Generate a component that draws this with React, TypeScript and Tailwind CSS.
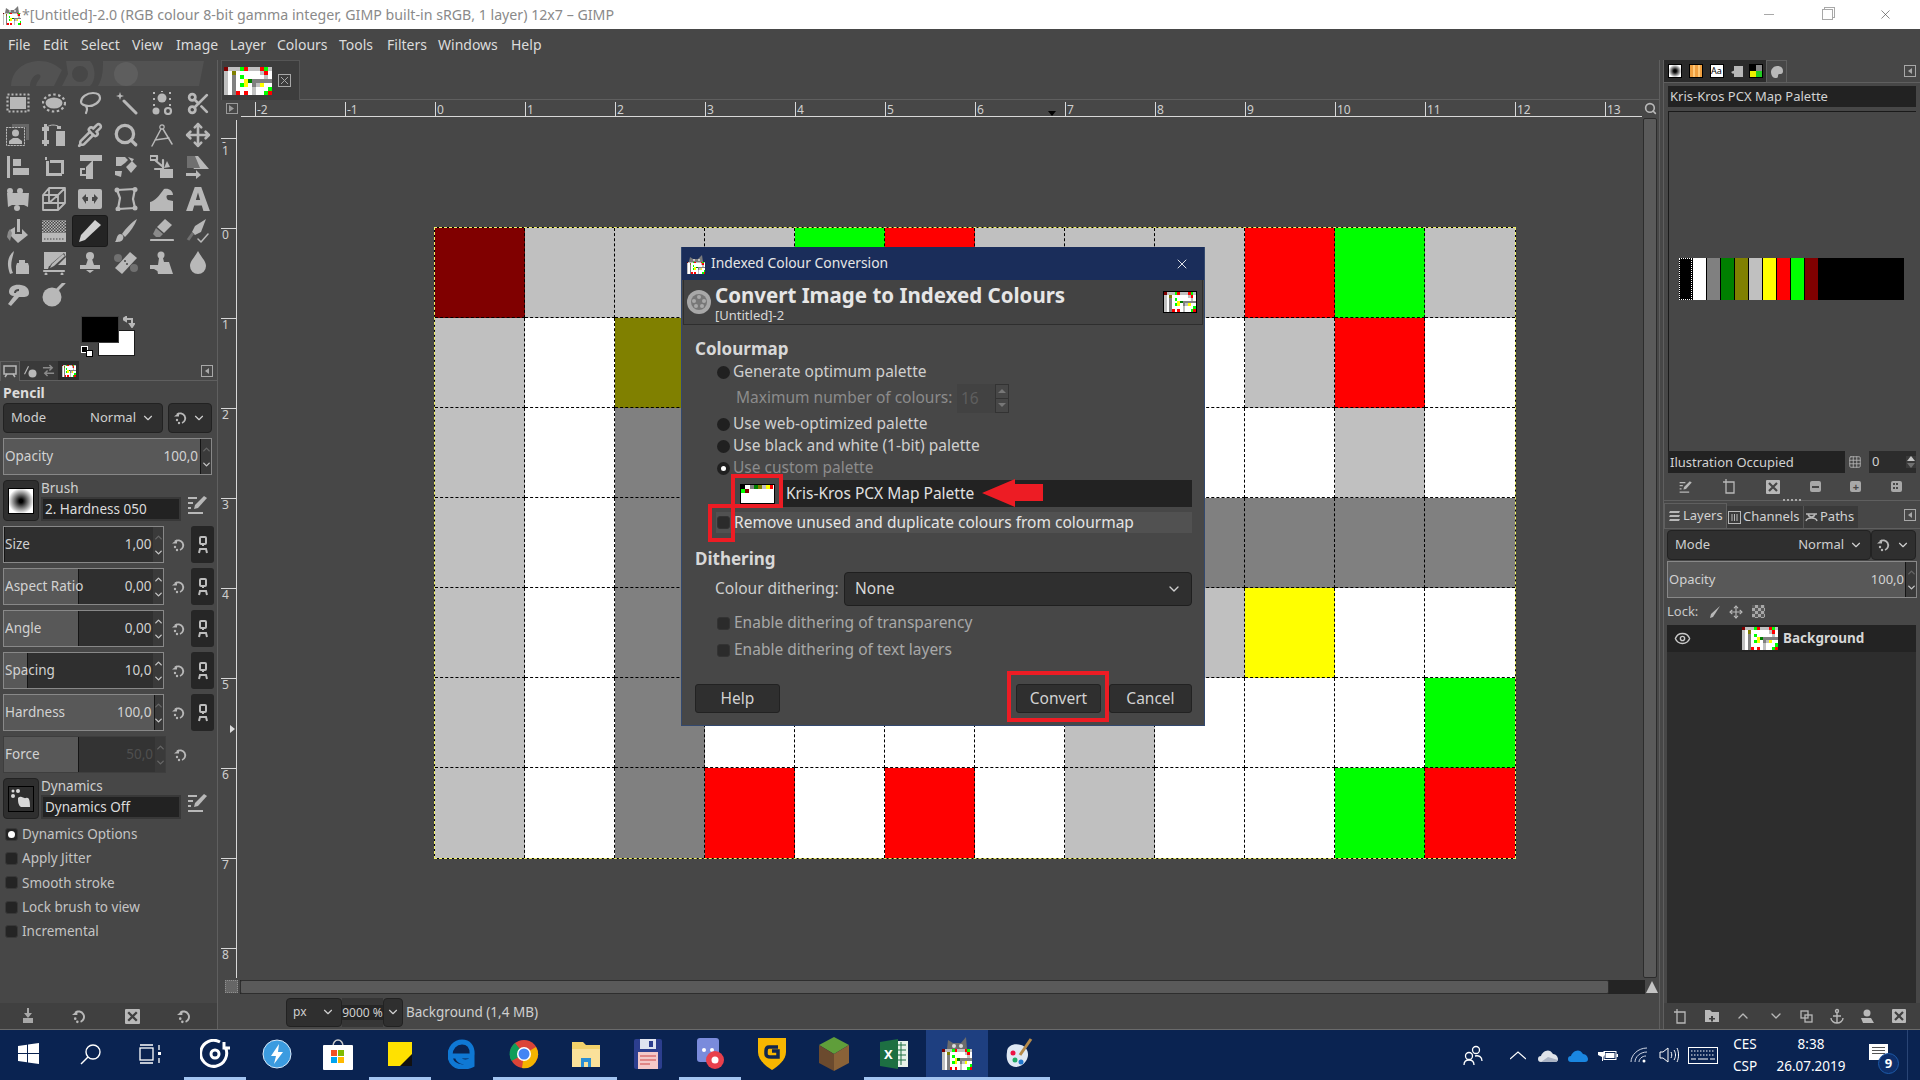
import React from "react";
import { Pipette, Search, Move, Scissors, Eye, Grid3x3, X, ChevronDown, ChevronUp } from "lucide-react";

const G = "#b8b8b8";
const cellClass: Record<string, string> = {
  m: "bg-[#800000]",
  s: "bg-[#c0c0c0]",
  g: "bg-[#808080]",
  w: "bg-[#ffffff]",
  o: "bg-[#808000]",
  r: "bg-[#ff0000]",
  l: "bg-[#00ff00]",
  y: "bg-[#ffff00]",
  k: "bg-[#008000]",
};
const canvasRows = [
  "mssslrsssrls",
  "swowwwwwwsrw",
  "swgwlwwwwwsw",
  "swgwwykggggg",
  "swgwlywgsyww",
  "swgwwwwswwwl",
  "swgrwrwswwlr",
];

function Thumb({ w, h, cell }: { w: number; h: number; cell: string }) {
  return (
    <div className={"flex flex-col overflow-hidden shrink-0 " + cell} style={{ width: w, height: h }}>
      {canvasRows.map((r, i) => (
        <div key={i} className="flex flex-1">
          {r.split("").map((c, j) => (
            <div key={j} className={"flex-1 " + cellClass[c]} />
          ))}
        </div>
      ))}
    </div>
  );
}
function AppIcon() {
  return (
    <div className="w-[20px] h-[20px] flex flex-col items-center justify-end shrink-0">
      <svg width="16" height="7" viewBox="0 0 16 7" className="block"><path d="M1 7L2 2l3 2h5l4-4 1 7z" fill="#7a7a7a" /><circle cx="6" cy="5" r="1" fill="#ddd" /><circle cx="11" cy="5" r="1" fill="#ddd" /></svg>
      <Thumb w={19} h={12} cell="" />
    </div>
  );
}

function Ic({ children, s = 24 }: { children: React.ReactNode; s?: number }) {
  return (
    <svg width={s} height={s} viewBox="0 0 24 24" fill={G} stroke="none">
      {children}
    </svg>
  );
}
const st = { fill: "none", stroke: G, strokeWidth: 2.2, strokeLinecap: "round" as const, strokeLinejoin: "round" as const };

const tools: React.ReactNode[] = [
  <Ic><rect x="1.5" y="3.5" width="21" height="17" {...st} strokeLinecap="butt" strokeDasharray="2 2" /><rect x="4" y="6" width="16" height="12" /></Ic>,
  <Ic><ellipse cx="12" cy="12" rx="11" ry="8.5" {...st} strokeLinecap="butt" strokeDasharray="2.5 2.5" /><ellipse cx="12" cy="12" rx="8.5" ry="5.5" /></Ic>,
  <Ic><path d="M3 11C3 6 9 2 15 2s7 3 7 5c0 4-6 8-11 8-5 0-8-2-8-4zM6 14c3 1 4 4 2 8" {...st} /></Ic>,
  <Ic><path d="M10 10l12 12" {...st} strokeWidth={3} /><path d="M6 1l1 3 3 1-3 1-1 3-1-3-3-1 3-1z" /></Ic>,
  <Ic><circle cx="12" cy="7" r="4.5" /><path d="M3 1h2v2H3zM11 0h2v1h-2zM19 1h2v2h-2zM3 7h2v2H3zM19 7h2v2h-2zM3 13h2v2H3zM19 13h2v2h-2z" /><circle cx="6" cy="20" r="3.5" /><circle cx="18" cy="20" r="3" {...st} /></Ic>,
  <Scissors size={25} color={G} strokeWidth={2.6} />,
  <Ic><rect x="0.5" y="4.5" width="18" height="18" {...st} strokeWidth={1} strokeDasharray="1.5 1.5" /><circle cx="9.5" cy="10" r="3.5" /><path d="M3 21v-3l4-3h5l4 3v3z" /><path d="M6 1h17v16h-3V4H6z" fill="#666" /></Ic>,
  <Ic><path d="M2 1h3v22H2zM0 4h7v4H0zM0 17h7v4H0z" /><path d="M5 4c4-3 8-2 11-1" {...st} strokeWidth={1} /><path d="M15 3h4v3h-4zM14 8h9v15h-9z" /></Ic>,
  <Pipette size={26} color={G} strokeWidth={2.4} />,
  <Search size={26} color={G} strokeWidth={3} />,
  <Ic><circle cx="12" cy="4" r="2.2" {...st} strokeWidth={1.2} /><path d="M11 6L2 23M13 6l9 15M5 17l14-2" {...st} strokeWidth={1.5} /></Ic>,
  <Move size={26} color={G} strokeWidth={2.4} />,
  <Ic><path d="M1 1h3v22H1zM7 4h8v7H7zM7 13h16v7H7z" /></Ic>,
  <Ic><path d="M3 2h2v3H3zM4 6h3v12h13v3H4zM8 5h14v14h-3V8H8z" /></Ic>,
  <Ic><path d="M2 0h22v6h-9v18h-7V12l6-6H2z" /><path d="M2 13h5v2H4v4h4v-2l3 3-3 3v-2H2z" /></Ic>,
  <Ic><path d="M2 2h9l3 3-3 3-4 3H2zM12 12l6-6 5 5-6 7zM14 2l6 2-2 3zM1 16h7l-1 6-6-2z" /></Ic>,
  <Ic><path d="M0 1h7v4H0zM6 6l6 5M13 5v9H5" {...st} /><path d="M10 14h13v9H10z" /><path d="M17 6l3 6-6 1z" fill={G} /></Ic>,
  <Ic><path d="M1 1h11l11 13H8z" /><path d="M1 1h8l5 12H1z" fill="#707070" /><path d="M0 18h10v-3l5 5-5 4v-3H0z" /></Ic>,
  <Ic><path d="M1 6h22l-1 14-4-2H6l-4 2z" /><circle cx="4" cy="4" r="3" /><circle cx="14" cy="4" r="3" /><circle cx="11" cy="21" r="3" /></Ic>,
  <Ic><path d="M1 8l6-7h16v15l-7 7H1zM1 8h15v15M16 8l7-7M7 1v15H1M7 16h16M7 16l9-8" fill="none" stroke={G} strokeWidth={1.8} strokeLinejoin="round" /></Ic>,
  <Ic><rect x="0" y="2" width="24" height="20" rx="2" /><path d="M4 11l4-4v3h2v4H8v3zM20 11l-4-4v3h-2v4h2v3z" fill="#474747" /></Ic>,
  <Ic><path d="M3 3l18-1-2 10 2 9-17 1 2-11z" {...st} /><circle cx="3" cy="3" r="2.5" /><circle cx="21" cy="2.5" r="2.5" /><circle cx="21" cy="21" r="2.5" /><circle cx="4" cy="22" r="2.5" /></Ic>,
  <Ic><path d="M0 24V15C5 14 9 9 14 2c5-1 9 2 9 6h-5c-2 0-2 3 0 5l5 1v10z" /></Ic>,
  <Ic s={26}><path d="M9 1h6l8 22h-6l-1.500-5h-7L7 23H1zM10 13h4l-2-7z" fillRule="evenodd" /></Ic>,
  <Ic><path d="M11 0h3v13h-3z" /><path d="M4 11l5-3v7h7v-5l6 6-10 8-9-9z" /><path d="M2 13l2-3 2 4-2 8-3-4z" fill="#8a8a8a" /></Ic>,
  <svg width={24} height={24} viewBox="0 0 24 24"><defs><pattern id="ck" width="3" height="3" patternUnits="userSpaceOnUse"><rect width="1.500" height="1.500" fill={G} /><rect x="1.500" y="1.500" width="1.500" height="1.500" fill={G} /></pattern></defs><rect x="0" y="1" width="24" height="14" fill="url(#ck)" /><rect x="0" y="14" width="24" height="9" fill={G} /><path d="M2 20h20" stroke="#474747" strokeDasharray="1.5 1.5" /></svg>,
  <Ic><path d="M17 1l6 5L7 21l-6 2 2-7z" fill="#d0d0d0" /></Ic>,
  <Ic><path d="M23 0C18 3 12 9 8 15l3 3C16 13 21 6 23 0z" /><path d="M6 15c3 0 4 3 3 5-1 3-5 3-8 3 2-2 1-7 5-8z" /></Ic>,
  <Ic><path d="M15 0l7 6-8 8-7-6z" /><path d="M6 9l7 6-3 3H6l-3-3z" fill="#8a8a8a" /><path d="M1 21h22" {...st} /></Ic>,
  <Ic><path d="M20 0L9 7l-3 6 3 3 6-3z" /><path d="M7 14l-5 7" stroke="#707070" strokeWidth={3} /><path d="M12 20l3 3 7-8" {...st} strokeWidth={1.5} /></Ic>,
  <Ic><path d="M8 0C2 5 0 12 4 23l3-1C3 14 7 6 8 0z" /><path d="M13 9h6v3h3l1 3v8H10v-8l1-3h2z" /></Ic>,
  <Ic><path d="M2 1h22v13H12l-5 1-1 3H2z" /><path d="M22 2L9 13l-3 7 7-3L24 6z" fill="#474747" /><path d="M21 3L10 13l-2 4 4-2L23 5z" /><path d="M2 20h20" {...st} /><circle cx="4" cy="23" r="1.5" /><circle cx="20" cy="23" r="1.500" /></Ic>,
  <Ic><circle cx="12" cy="5" r="4" /><path d="M10 8h4l2 6h6v4H2v-4h6zM8 19h8l-4 3z" /></Ic>,
  <Ic><path d="M16 1l7 6L8 23l-7-6z" /><circle cx="4" cy="7" r="4" fill="#707070" /><circle cx="20" cy="17" r="4" fill="#707070" /><circle cx="11" cy="10" r="1" fill="#474747" /><circle cx="13" cy="13" r="1" fill="#474747" /></Ic>,
  <Ic><circle cx="11" cy="4" r="3.500" /><path d="M9 7h4l1 4h5l4 12H8l-1-5H0v-4h8zM4 18h9l-4 3z" /></Ic>,
  <Ic><path d="M12 0c3 6 8 10 8 15a8 8 0 0 1-16 0c0-5 5-9 8-15z" /></Ic>,
  <Ic><path d="M3 9c0-6 6-8 12-7s8 4 8 8-4 4-7 4h-3l-8 9-3-2 6-8C5 13 3 11 3 9z" /><path d="M13 7c-2 0-4 1-4 3" stroke="#474747" strokeWidth={2} fill="none" /></Ic>,
  <Ic><circle cx="10" cy="14" r="9.500" /><path d="M15 7l7-7" {...st} strokeWidth={3} /></Ic>,
];

function Rst({ c = G, s = 14 }: { c?: string; s?: number }) {
  return (
    <svg width={s} height={s} viewBox="0 0 14 14" fill="none">
      <path d="M3 3.500A5 5 0 1 1 8 12" stroke={c} strokeWidth="1.800" />
      <path d="M0 4h5V0z" fill={c} transform="translate(0 1.500)" />
      <circle cx="3" cy="9" r="1.200" fill={c} />
      <circle cx="5" cy="12" r="1.200" fill={c} />
    </svg>
  );
}
function Lock() {
  return (
    <svg width="10" height="18" viewBox="0 0 10 18" fill="none" stroke="#bdbdbd" strokeWidth="2">
      <rect x="2" y="1" width="6" height="7" rx="1" />
      <path d="M5 8v2M1 17l1-4h6l1 4" />
    </svg>
  );
}
function EditI() {
  return (
    <svg width="22" height="20" viewBox="0 0 22 20" fill={G}>
      <path d="M1 2h9v2H1zM1 7h5v2H1zM1 12h3v2H1zM1 17h15v2H1z" />
      <path d="M17 1l3 2-9 10-4 1 1-4z" />
    </svg>
  );
}
function Dn({ c = "#d0d0d0", s = 14 }: { c?: string; s?: number }) {
  return <ChevronDown size={s} color={c} strokeWidth={2} />;
}
function Spin({ dim = false, topDim = false }: { dim?: boolean; topDim?: boolean }) {
  return (
    <div className="w-[10px] flex flex-col items-center justify-center bg-[#3a3a3a] self-stretch gap-1">
      <ChevronUp size={11} strokeWidth={3} color={dim || topDim ? "#666" : "#c4c4c4"} />
      <ChevronDown size={11} strokeWidth={3} color={dim ? "#666" : "#c4c4c4"} />
    </div>
  );
}
function Slider({ label, value, fill, topDim, disabled }: { label: string; value: string; fill: number; topDim?: boolean; disabled?: boolean }) {
  return (
    <div className={"relative w-[163px] h-[37px] flex items-center border " + (disabled ? "border-[#3e3e3e] bg-[#333]" : "border-[#888] bg-[#2f2f2f]")}>
      <div className="absolute left-0 top-0 bottom-0 bg-[#585858] border-r border-[#151515]" style={{ width: fill }} />
      <span className="relative pl-[1px] flex-1 text-[#d2d2d2]">{label}</span>
      <span className={"relative pr-[2px] " + (disabled ? "text-[#4f4f4f]" : "text-[#d2d2d2]")}>{value}</span>
      <Spin dim={disabled} topDim={topDim} />
    </div>
  );
}
function SpinRow(p: { label: string; value: string; fill: number; topDim?: boolean; disabled?: boolean }) {
  return (
    <div className="flex items-center h-[37px]">
      <Slider {...p} />
      <div className="w-[27px] flex justify-center pl-[3px]"><Rst /></div>
      {!p.disabled && (
        <div className="w-[23px] h-[37px] rounded-[3px] bg-[#262626] flex items-center justify-center"><Lock /></div>
      )}
    </div>
  );
}
function Check({ label, on }: { label: string; on?: boolean }) {
  return (
    <div className="flex items-center h-[24.300px] gap-[4px] pl-[2px] text-[#c4c4c4]">
      <div className="w-[13px] h-[13px] rounded-[3px] bg-[#242424] border border-[#383838] flex items-center justify-center">
        {on && <div className="w-[7px] h-[7px] rounded-full bg-white" />}
      </div>
      <span>{label}</span>
    </div>
  );
}
function Combo({ w, label, value, h = 30 }: { w: number; label: string; value: string; h?: number }) {
  return (
    <div className="flex items-center px-[7px] rounded-[4px] bg-[#2f2f2f] border border-[#222] text-[#cfcfcf] text-[13px]" style={{ width: w, height: h }}>
      <span className="flex-1">{label}</span>
      <span className="mr-[5px]">{value}</span>
      <Dn />
    </div>
  );
}
function ResetCombo({ w }: { w: number }) {
  return (
    <div className="h-[30px] flex items-center justify-between px-[5px] rounded-[4px] bg-[#2f2f2f] border border-[#222]" style={{ width: w }}>
      <Rst /><Dn />
    </div>
  );
}

function LeftDock() {
  return (
    <div className="w-[218px] h-full shrink-0 flex flex-col border-r border-[#5f5f5f] text-[13.500px]">
      <div className="h-[27px] relative shrink-0">
        <svg width="218" height="27" viewBox="0 0 218 27" fill="#525252" className="block">
          <path d="M11 26C12 10 24 1 40 1c8 0 15 3 22 9l-8 16H36c1-6 6-8 4-11-3-3-10 3-10 11z" />
          <path d="M66 1h24c6 6 6 20 0 25H62l6-12zM72 14a8 8 0 1 0 16 0 8 8 0 0 0-16 0z" fillRule="evenodd" />
          <path d="M103 1h101l-5 25H98c5-8 5-18 5-25z" />
          <circle cx="126" cy="14" r="12" fill="#5e5e5e" />
        </svg>
      </div>
      <div className="grid grid-cols-[repeat(6,36px)] auto-rows-[32px] w-[216px] shrink-0">
        {tools.map((t, i) => (
          <div key={i} className="flex items-center justify-center">
            <div className={"w-[36px] h-[32px] flex items-center justify-center rounded-[3px] " + (i === 26 ? "bg-[#242424] border border-[#1a1a1a]" : "")}>{t}</div>
          </div>
        ))}
      </div>
      <div className="relative h-[50px] shrink-0">
        <div className="absolute left-[98px] top-[19px] w-[37px] h-[26px] bg-white border border-[#1c1c1c]" />
        <div className="absolute left-[81px] top-[5px] w-[38px] h-[27px] bg-black border border-[#3c3c3c]" />
        <div className="absolute left-[81px] top-[35px] w-[7px] h-[7px] bg-black border border-white" />
        <div className="absolute left-[86px] top-[39px] w-[7px] h-[7px] bg-white border border-black" />
        <svg width="12" height="12" viewBox="0 0 12 12" fill="none" stroke={G} strokeWidth="2" className="absolute left-[123px] top-[5px]"><path d="M1 3h8v7M0 3l3-2v4zM9 11l-2-3h4z" /></svg>
      </div>
      <div className="h-[20px] shrink-0 flex items-center border-b border-[#5f5f5f] relative">
        <div className="w-[20px] h-[20px] flex items-center justify-center bg-[#474747] border border-b-0 border-[#5f5f5f]"><svg width="14" height="14" viewBox="0 0 14 14" fill="none" stroke={G} strokeWidth="1.500"><rect x="1" y="2" width="12" height="8" /><path d="M2 13l2-3M12 13l-2-3" /></svg></div>
        <div className="w-[19px] h-[19px] flex items-center justify-center bg-[#3a3a3a]"><svg width="14" height="14" viewBox="0 0 14 14" fill={G}><path d="M1 10l4-8 1 .5-4 8z" /><circle cx="9.500" cy="9.500" r="4" /></svg></div>
        <div className="w-[19px] h-[19px] flex items-center justify-center bg-[#3a3a3a]"><svg width="13" height="13" viewBox="0 0 14 14" fill="none" stroke="#8a8a8a" strokeWidth="1.600"><path d="M1 4h10M8 1l3 3-3 3M13 10H3M6 7l-3 3 3 3" /></svg></div>
        <div className="w-[21px] h-[19px] flex items-center justify-center bg-[#2c2c2c]"><Thumb w={14} h={12} cell="" /></div>
        <svg width="12" height="12" viewBox="0 0 12 12" className="absolute left-[201px] top-[4px]"><rect x=".5" y=".5" width="11" height="11" fill="none" stroke="#a8a8a8" /><path d="M8 3v6L4 6z" fill="#a8a8a8" /></svg>
      </div>
      <div className="flex-1 flex flex-col px-[3px] min-h-0">
        <div className="h-[21px] flex items-center font-bold text-[#dcdcdc] text-[14px] pt-[1px]">Pencil</div>
        <div className="flex justify-between w-[209px] mt-[1px]"><Combo w={160} label="Mode" value="Normal" /><ResetCombo w={44} /></div>
        <div className="relative w-[209px] h-[37px] mt-[5px] flex items-center border border-[#888] bg-[#585858]">
          <span className="flex-1 pl-[1px] text-[#d2d2d2]">Opacity</span>
          <span className="pr-[2px] text-[#d2d2d2]">100,0</span>
          <div className="border-l border-[#151515] self-stretch flex"><Spin topDim /></div>
        </div>
        <div className="flex h-[41px] mt-[5px]">
          <div className="w-[36px] h-[41px] rounded-[4px] bg-[#2f2f2f] border border-[#222] flex items-center justify-center">
            <div className="w-[26px] h-[26px] bg-white border border-black flex items-center justify-center bg-[radial-gradient(circle,#000_10%,#fff_75%)]" />
          </div>
          <div className="ml-[2px] w-[140px]">
            <div className="h-[17px] leading-[17px] text-[#cfcfcf]">Brush</div>
            <div className="h-[24px] bg-[#222] border-2 border-[#383838] pl-[2px] leading-[20px] text-[#dcdcdc]">2. Hardness 050</div>
          </div>
          <div className="ml-[6px] flex items-center pt-[8px]"><EditI /></div>
        </div>
        <div className="flex flex-col gap-[5px] mt-[5px]">
          <SpinRow label="Size" value="1,00" fill={0} topDim />
          <SpinRow label="Aspect Ratio" value="0,00" fill={75} />
          <SpinRow label="Angle" value="0,00" fill={75} />
          <SpinRow label="Spacing" value="10,0" fill={24} />
          <SpinRow label="Hardness" value="100,0" fill={151} topDim />
          <SpinRow label="Force" value="50,0" fill={75} disabled />
        </div>
        <div className="flex h-[41px] mt-[5px]">
          <div className="w-[36px] h-[41px] rounded-[4px] bg-[#2f2f2f] border border-[#222] flex items-center justify-center">
            <div className="w-[26px] h-[26px] border border-black flex items-center justify-center"><svg width="22" height="22" viewBox="0 0 22 22" fill="#d8d8d8"><circle cx="3" cy="3" r="1.500" /><circle cx="8" cy="3" r="2" /><circle cx="3" cy="8" r="2" /><path d="M8 10c4-3 5 1 8 0 3-1 4 2 4 9H11c-3-2-3-6-3-9z" /></svg></div>
          </div>
          <div className="ml-[2px] w-[140px]">
            <div className="h-[17px] leading-[17px] text-[#cfcfcf]">Dynamics</div>
            <div className="h-[24px] bg-[#222] border-2 border-[#383838] pl-[2px] leading-[20px] text-[#dcdcdc]">Dynamics Off</div>
          </div>
          <div className="ml-[6px] flex items-center pt-[8px]"><EditI /></div>
        </div>
        <div className="mt-[3px] flex flex-col">
          <Check label="Dynamics Options" on />
          <Check label="Apply Jitter" />
          <Check label="Smooth stroke" />
          <Check label="Lock brush to view" />
          <Check label="Incremental" />
        </div>
      </div>
      <div className="h-[26px] shrink-0 flex items-center justify-between pl-[21px] pr-[25px] bg-[#404040]">
        <svg width="14" height="16" viewBox="0 0 14 16" fill="#a8a8a8"><path d="M6 0h2v5h3l-4 5-4-5h3zM2 10h10v5H2z" /></svg>
        <Rst s={15} />
        <svg width="15" height="15" viewBox="0 0 14 14"><rect width="14" height="14" rx="1" fill={G} /><path d="M3 3l8 8M11 3l-8 8" stroke="#404040" strokeWidth="2.200" /></svg>
        <Rst s={15} />
      </div>
    </div>
  );
}

const hTicks = [-2, -1, 0, 1, 2, 3, 4, 5, 6, 7, 8, 9, 10, 11, 12, 13];
const vTicks = [-1, 0, 1, 2, 3, 4, 5, 6, 7, 8];

function Center() {
  return (
    <div className="flex-1 h-full flex flex-col min-w-0 border-r border-[#5f5f5f] pl-[3px] relative text-[12px]">
      <div className="h-[40px] shrink-0 border-b border-[#5f5f5f] flex">
        <div className="w-[79px] h-[40px] bg-[#3d3d3d] border border-b-0 border-[#555] flex items-center pl-[2px] gap-[6px]">
          <Thumb w={48} h={28} cell="" />
          <svg width="13" height="13" viewBox="0 0 13 13" fill="none" stroke="#a8a8a8"><rect x=".5" y=".5" width="12" height="12" /><path d="M3 3l7 7M10 3l-7 7" /></svg>
        </div>
      </div>
      <div className="h-[17px] shrink-0 flex">
        <div className="w-[20px] shrink-0 flex items-center justify-center pl-[2px]"><svg width="12" height="11" viewBox="0 0 12 11"><rect x=".5" y=".5" width="11" height="10" fill="none" stroke="#9a9a9a" /><path d="M3 2v7l5-3.500z" fill="#9a9a9a" /></svg></div>
        <div className="flex-1 min-w-0 overflow-hidden relative border-b border-[#d8d8d8] flex pl-[14px] text-[#cfcfcf]">
          {hTicks.map((t) => (
            <div key={t} className="w-[90px] shrink-0 border-l border-[#d8d8d8] pl-[1px] leading-[15px] mt-[2px] h-[14px]">{t}</div>
          ))}
          <div className="absolute left-[807px] top-[11px] w-0 h-0 border-l-[4px] border-r-[4px] border-t-[5px] border-l-transparent border-r-transparent border-t-black" />
        </div>
        <div className="w-[17px] shrink-0 flex items-center justify-center"><Search size={13} color={G} strokeWidth={3} /></div>
      </div>
      <div className="flex-1 min-h-0 flex">
        <div className="w-[16px] shrink-0 border-r border-[#d8d8d8] mt-[3px] pt-[18px] text-[#cfcfcf] relative">
          {vTicks.map((t) => (
            <div key={t} className="h-[90px] border-t border-[#d8d8d8] leading-[11px] pl-[1px]">
              {t < 0 && <div className="h-[6px] leading-[6px]">-</div>}
              {Math.abs(t)}
            </div>
          ))}
          <div className="absolute left-[9px] top-[605px] w-0 h-0 border-t-[4px] border-b-[4px] border-l-[5px] border-t-transparent border-b-transparent border-l-[#dcdcdc]" />
        </div>
        <div className="flex-1 min-w-0">
          <div className="ml-[198px] mt-[111px] w-[1080px] h-[630px] shadow-[0_0_0_1px_#000000] outline outline-1 outline-dashed outline-[#f2f26a] grid grid-cols-[repeat(12,90px)] grid-rows-[repeat(7,90px)]">
            {canvasRows.flatMap((r, i) =>
              r.split("").map((c, j) => (
                <div key={i + "-" + j} className={cellClass[c] + " border-dashed border-black " + (j < 11 ? "border-r " : "") + (i < 6 ? "border-b" : "")} />
              ))
            )}
          </div>
        </div>
        <div className="w-[18px] shrink-0 flex justify-center">
          <div className="w-[14px] h-[860px] mt-[1px] bg-[#5a5a5a] border border-[#2c2c2c] rounded-[2px]" />
        </div>
      </div>
      <div className="h-[17px] shrink-0 flex items-center">
        <div className="w-[18px] shrink-0 flex justify-center pl-[2px]"><div className="w-[13px] h-[13px] bg-[#666] border border-dotted border-[#909090]" /></div>
        <div className="w-[1405px] shrink-0 h-[14px] bg-[#242424] ml-[1px] flex">
          <div className="w-[1369px] h-[14px] bg-[#5a5a5a] border border-[#2e2e2e] rounded-[2px]" />
        </div>
        <div className="w-0 h-0 ml-[1px] border-l-[6px] border-r-[6px] border-b-[12px] border-l-transparent border-r-transparent border-b-[#c4c4c4]" />
      </div>
      <div className="h-[34px] shrink-0 flex items-center pl-[65px] text-[13px] text-[#cfcfcf]">
        <div className="w-[56px] h-[29px] bg-[#2f2f2f] rounded-[4px] border border-[#222] flex items-center justify-between px-[6px] text-[12px]">px<Dn /></div>
        <div className="w-[41px] h-[29px] bg-[#363636] flex items-center justify-center"><div className="bg-[#262626] h-[15px] leading-[15px] text-[12px]">9000 %</div></div>
        <div className="w-[20px] h-[29px] bg-[#2f2f2f] rounded-[4px] border border-[#222] flex items-center justify-center"><Dn /></div>
        <span className="ml-[3px] text-[13.500px]">Background (1,4 MB)</span>
      </div>
    </div>
  );
}

const palette = ["bg-black", "bg-white", "bg-[#808080]", "bg-[#008000]", "bg-[#808000]", "bg-[#c0c0c0]", "bg-[#ffff00]", "bg-[#ff0000]", "bg-[#00ff00]", "bg-[#800000]"];

function RightDock() {
  return (
    <div className="w-[257px] h-full shrink-0 flex flex-col text-[13px] text-[#d2d2d2] ml-[3px] border-l border-[#5f5f5f]">
      <div className="h-[22px] shrink-0 flex items-end relative">
        <div className="flex h-[22px]">
          <div className="w-[21px] bg-[#2a2a2a] flex items-center justify-center"><div className="w-[14px] h-[14px] bg-[radial-gradient(circle,#000_15%,#fff_75%)] border border-black" /></div>
          <div className="w-[21px] bg-[#2a2a2a] flex items-center justify-center"><div className="w-[14px] h-[14px] bg-[repeating-linear-gradient(90deg,#f0a040,#f0a040_3px,#ffc878_3px,#ffc878_5px)] border border-black" /></div>
          <div className="w-[21px] bg-[#2a2a2a] flex items-center justify-center"><div className="w-[14px] h-[14px] bg-white border border-black text-black text-[9px] leading-[12px] text-center">Aa</div></div>
          <div className="w-[19px] bg-[#2a2a2a] flex items-center justify-center"><svg width="14" height="14" viewBox="0 0 14 14" fill={G}><path d="M4 2h9v11H4zM1 8l6-3v2l-4 3z" /></svg></div>
          <div className="w-[20px] bg-[#2a2a2a] flex items-center justify-center"><div className="w-[14px] h-[14px] grid grid-cols-2 grid-rows-2 border border-black"><div className="bg-black" /><div className="bg-[#888]" /><div className="bg-[#ee0]" /><div className="bg-[#2c2]" /></div></div>
          <div className="w-[21px] h-[22px] border border-b-0 border-[#5f5f5f] flex items-center justify-center"><svg width="14" height="14" viewBox="0 0 14 14" fill={G}><path d="M7 1c4 0 6 2 6 5s-2 3-3 3-2 0-2 2-1 2-3 2-4-3-4-6 3-6 6-6z" /></svg></div>
        </div>
        <svg width="12" height="12" viewBox="0 0 12 12" className="absolute right-[4px] top-[5px]"><rect x=".5" y=".5" width="11" height="11" fill="none" stroke="#a8a8a8" /><path d="M8 3v6L4 6z" fill="#a8a8a8" /></svg>
      </div>
      <div className="border-t border-[#5f5f5f] pl-[4px] pr-[4px] flex flex-col h-[369px] shrink-0">
        <div className="mt-[3px] h-[21px] bg-[#222] leading-[21px] pl-[2px] text-[13px]">Kris-Kros PCX Map Palette</div>
        <div className="mt-[4px] flex-1 border-t border-l border-[#1a1a1a] pl-[10px] pt-[146px] min-h-0">
          <div className="w-[225px] h-[42px] bg-black flex">
            {palette.map((c, i) => (
              <div key={i} className={"w-[13px] mr-[1px] h-full " + c + (i === 0 ? " outline-1 outline-dotted outline-white -outline-offset-1" : "")} />
            ))}
          </div>
        </div>
      </div>
      <div className="h-[22px] flex shrink-0 pl-[4px] pr-[4px] items-center">
        <div className="w-[181px] h-[22px] bg-[#222] leading-[22px] pl-[2px]">Ilustration Occupied</div>
        <div className="w-[20px] flex justify-center ml-[1px]"><Grid3x3 size={14} color={G} strokeWidth={1.4} /></div>
        <div className="w-[48px] h-[22px] bg-[#2c2c2c] ml-[4px] flex items-center justify-between pl-[3px]"><span>0</span><div className="flex flex-col gap-[2px] bg-[#3a3a3a] px-[1px]"><span className="block w-0 h-0 border-l-[4px] border-r-[4px] border-b-[5px] border-l-transparent border-r-transparent border-b-[#c4c4c4]" /><span className="block w-0 h-0 border-l-[4px] border-r-[4px] border-t-[5px] border-l-transparent border-r-transparent border-t-[#707070]" /></div></div>
      </div>
      <div className="h-[28px] shrink-0 flex items-center justify-between pl-[15px] pr-[18px] border-b border-[#5f5f5f] relative">
        <EditISm />
        <NewI />
        <svg width="14" height="14" viewBox="0 0 14 14"><rect width="14" height="14" rx="1" fill={G} /><path d="M3 3l8 8M11 3l-8 8" stroke="#474747" strokeWidth="2.200" /></svg>
        <div className="w-[11px] h-[11px] rounded-[2px] bg-[#a8a8a8] flex items-center justify-center"><div className="w-[7px] h-[2px] bg-[#474747]" /></div>
        <div className="w-[11px] h-[11px] rounded-[2px] bg-[#a8a8a8] flex items-center justify-center text-[#474747] text-[11px] leading-none font-bold">+</div>
        <div className="w-[11px] h-[11px] rounded-[2px] bg-[#a8a8a8] flex flex-wrap p-[2px] gap-[1px]"><span className="w-[2px] h-[2px] bg-[#474747]" /><span className="w-[2px] h-[2px] bg-[#474747]" /><span className="w-[2px] h-[2px] bg-[#474747]" /><span className="w-[2px] h-[2px] bg-[#474747]" /></div>
        <div className="absolute left-[119px] top-[26px] w-[18px] h-[2px] border-t-2 border-dotted border-[#aaa]" />
      </div>
      <div className="h-[27px] shrink-0 flex items-end relative">
        <div className="w-[63px] h-[25px] flex items-center gap-[2px] pl-[3px] border border-b-0 border-[#5f5f5f] text-[13px]"><svg width="13" height="12" viewBox="0 0 13 12" fill={G}><path d="M2 1h10l-1 2H1zM2 5h10l-1 2H1zM2 9h10l-1 2H1z" /></svg>Layers</div>
        <div className="w-[76px] h-[22px] bg-[#3a3a3a] flex items-center gap-[2px] pl-[1px] text-[13px]"><svg width="13" height="13" viewBox="0 0 13 13" fill="none" stroke={G}><rect x=".5" y=".5" width="12" height="12" /><path d="M4 3v7M6.500 3v7M9 3v7" /></svg>Channels</div>
        <div className="w-[55px] h-[22px] bg-[#3a3a3a] border-l border-[#555] flex items-center gap-[2px] pl-[1px] text-[13px]"><svg width="13" height="11" viewBox="0 0 13 11" fill="none" stroke={G} strokeWidth="1.500"><path d="M1 2h11M3 2c1 4 6 4 7 0M1 9c1-4 10-4 11 0" /></svg>Paths</div>
        <svg width="12" height="12" viewBox="0 0 12 12" className="absolute right-[4px] top-[8px]"><rect x=".5" y=".5" width="11" height="11" fill="none" stroke="#a8a8a8" /><path d="M8 3v6L4 6z" fill="#a8a8a8" /></svg>
      </div>
      <div className="border-t border-[#5f5f5f] px-[3px] flex-1 min-h-0 flex flex-col pr-[4px]">
        <div className="flex justify-between mt-[1px]"><Combo w={205} label="Mode" value="Normal" /><ResetCombo w={45} /></div>
        <div className="w-[250px] h-[37px] mt-[1px] flex items-center border border-[#888] bg-[#585858] shrink-0">
          <span className="flex-1 pl-[1px]">Opacity</span>
          <span className="pr-[1px]">100,0</span>
          <div className="border-l border-[#151515] self-stretch flex"><Spin topDim /></div>
        </div>
        <div className="h-[27px] flex items-center gap-[7px] shrink-0 text-[#c8c8c8]">
          <span className="mr-[3px]">Lock:</span>
          <svg width="14" height="14" viewBox="0 0 14 14" fill={G}><path d="M12 1L3 9l-1 4 3-1z" /></svg>
          <Move size={14} color={G} strokeWidth={2} />
          <div className="ml-[2px] w-[13px] h-[13px] bg-[repeating-conic-gradient(#a8a8a8_0_25%,#5a5a5a_0_50%)] bg-[length:6px_6px]" />
        </div>
        <div className="flex-1 bg-[#2d2d2d] min-h-0">
          <div className="h-[27px] bg-[#232323] flex items-center pl-[7px]">
            <Eye size={17} color="#c8c8c8" strokeWidth={2} />
            <div className="ml-[51px]"><Thumb w={36} h={23} cell="" /></div>
            <span className="ml-[5px] font-bold text-[#d6d6d6] text-[13.500px]">Background</span>
          </div>
        </div>
      </div>
      <div className="h-[26px] shrink-0 flex items-center justify-between pl-[10px] pr-[14px] bg-[#404040]">
        <NewI />
        <svg width="14" height="14" viewBox="0 0 14 14" fill={G}><path d="M0 1h5l2 2h7v10H0zM6 7v2H4v1.500h2v2h2v-2h2V9H8V7z" fillRule="evenodd" /></svg>
        <ChevronUp size={16} color={G} strokeWidth={2} />
        <ChevronDown size={16} color={G} strokeWidth={2} />
        <svg width="13" height="13" viewBox="0 0 13 13" fill="none" stroke={G} strokeWidth="1.300"><rect x="1" y="1" width="7" height="7" /><rect x="5" y="5" width="7" height="7" /></svg>
        <svg width="14" height="16" viewBox="0 0 14 16" fill="none" stroke={G} strokeWidth="1.400"><circle cx="7" cy="3" r="1.500" /><path d="M7 5v10M3 8h8M1 10c0 3 3 5 6 5s6-2 6-5" /></svg>
        <svg width="15" height="15" viewBox="0 0 15 15" fill={G}><circle cx="7" cy="4" r="3.500" /><path d="M1 9h10l3 5H3z" /></svg>
        <svg width="14" height="14" viewBox="0 0 14 14"><rect width="14" height="14" rx="1" fill={G} /><path d="M3 3l8 8M11 3l-8 8" stroke="#404040" strokeWidth="2.200" /></svg>
      </div>
    </div>
  );
}
function EditISm() {
  return <svg width="14" height="14" viewBox="0 0 22 20" fill={G}><path d="M1 2h9v2H1zM1 7h5v2H1zM1 12h3v2H1zM1 17h15v2H1z" /><path d="M17 1l3 2-9 10-4 1 1-4z" /></svg>;
}
function NewI() {
  return <svg width="14" height="15" viewBox="0 0 14 15" fill="none" stroke={G} strokeWidth="1.300"><path d="M3 3h8v11H3zM3 0v5M0 3h6" /></svg>;
}

function Radio({ label, on, dim }: { label: string; on?: boolean; dim?: boolean }) {
  return (
    <div className={"h-[22px] flex items-center pl-[22px] gap-[3px] " + (dim ? "text-[#8c8c8c]" : "text-[#cfcfcf]")}>
      <div className="w-[13px] h-[13px] rounded-full bg-[#202020] flex items-center justify-center">{on && <div className="w-[5px] h-[5px] rounded-full bg-white" />}</div>
      <span>{label}</span>
    </div>
  );
}
function DCheck({ label }: { label: string }) {
  return (
    <div className="h-[22px] flex items-center pl-[22px] gap-[4px] text-[#a8a8a8]">
      <div className="w-[13px] h-[13px] rounded-[3px] bg-[#2b2b2b] border border-[#333]" />
      <span>{label}</span>
    </div>
  );
}
function Btn({ w, label }: { w: number; label: string }) {
  return <div className="h-[29px] rounded-[3px] bg-[#2f2f2f] border border-[#222] flex items-center justify-center text-[#d2d2d2]" style={{ width: w }}>{label}</div>;
}

function Dialog() {
  return (
    <div className="absolute left-[681px] top-[247px] w-[524px] h-[479px] bg-[#474747] border-x border-b border-[#33496f] flex flex-col text-[15.500px]">
      <div className="h-[33px] shrink-0 bg-[#1a2d5a] flex items-center pl-[4px] pr-[14px] text-white text-[13.900px] gap-[5px]">
        <AppIcon />
        <span className="flex-1 text-[#e6e6e6]">Indexed Colour Conversion</span>
        <X size={16} color="#fff" strokeWidth={1.300} />
      </div>
      <div className="h-[45px] shrink-0 mx-[1px] bg-[#434343] border-x border-b border-[#2e2e2e] flex items-center pl-[3px] pr-[5px]">
        <svg width="24" height="24" viewBox="0 0 24 24" className="shrink-0"><circle cx="12" cy="12" r="12" fill="#a8a8a8" /><circle cx="12" cy="12" r="8" fill="#777" /><circle cx="12" cy="7" r="2" fill="#a8a8a8" /><circle cx="7" cy="11" r="2" fill="#a8a8a8" /><circle cx="17" cy="11" r="2" fill="#a8a8a8" /><circle cx="9" cy="16" r="2" fill="#a8a8a8" /><circle cx="15" cy="16" r="2" fill="#a8a8a8" /></svg>
        <div className="flex-1 ml-[4px] flex flex-col">
          <div className="font-bold text-[20.500px] leading-[25px] text-[#e6e6e6]">Convert Image to Indexed Colours</div>
          <div className="text-[13px] leading-[14px] text-[#d8d8d8]">[Untitled]-2</div>
        </div>
        <div className="border border-black"><Thumb w={32} h={20} cell="" /></div>
      </div>
      <div className="flex flex-col pl-[13px] pr-[12px] flex-1 min-h-0">
        <div className="mt-[13px] h-[23px] leading-[22px] font-bold text-[17px] text-[#d8d8d8]">Colourmap</div>
        <Radio label="Generate optimum palette" />
        <div className="h-[30px] flex items-center pl-[41px] text-[#8c8c8c]">
          <span className="w-[221px]">Maximum number of colours:</span>
          <div className="w-[38px] h-[29px] bg-[#424242] leading-[29px] pl-[4px] text-[#5e5e5e]">16</div>
          <div className="w-[14px] h-[29px] flex flex-col border border-[#333]">
            <div className="flex-1 border-b border-[#333] flex items-center justify-center"><div className="w-0 h-0 border-l-[4px] border-r-[4px] border-b-[4px] border-l-transparent border-r-transparent border-b-[#777]" /></div>
            <div className="flex-1 flex items-center justify-center"><div className="w-0 h-0 border-l-[4px] border-r-[4px] border-t-[4px] border-l-transparent border-r-transparent border-t-[#777]" /></div>
          </div>
        </div>
        <Radio label="Use web-optimized palette" />
        <Radio label="Use black and white (1-bit) palette" />
        <Radio label="Use custom palette" on dim />
        <div className="h-[27px] mt-[1px] ml-[41px] flex items-center">
          <div className="w-[47px] flex justify-center pr-[5px]">
            <div className="w-[35px] h-[20px] bg-white border border-black flex flex-col">
              <div className="h-[4px] flex"><span className="w-[5px] bg-black" /><span className="w-[5px] bg-white" /><span className="w-[4px] bg-[#808080]" /><span className="w-[4px] bg-[#008000]" /><span className="w-[4px] bg-[#808000]" /><span className="w-[4px] bg-[#c0c0c0]" /><span className="w-[4px] bg-[#ffff00]" /><span className="w-[4px] bg-[#ff0000]" /></div>
              <div className="h-[4px] flex"><span className="w-[4px] bg-[#00ff00]" /><span className="w-[4px] bg-[#800000]" /></div>
            </div>
          </div>
          <div className="flex-1 h-[27px] bg-[#222] leading-[27px] pl-[3px] text-[#e0e0e0]">Kris-Kros PCX Map Palette</div>
        </div>
        <div className="mt-[5px] ml-[21px] h-[21px] bg-[#515151] flex items-center pl-[1px] gap-[4px] text-[#e4e4e4]">
          <div className="w-[13px] h-[13px] rounded-[3px] bg-[#2b2b2b] border border-[#333]" />
          <span>Remove unused and duplicate colours from colourmap</span>
        </div>
        <div className="mt-[15px] h-[22px] leading-[22px] font-bold text-[17px] text-[#d8d8d8]">Dithering</div>
        <div className="flex items-center h-[34px] mt-[2px] pl-[20px] text-[#cfcfcf]">
          <span className="w-[129px]">Colour dithering:</span>
          <div className="flex-1 h-[34px] rounded-[4px] bg-[#2f2f2f] border border-[#1f1f1f] flex items-center pl-[10px] pr-[9px]">
            <span className="flex-1 text-[#d8d8d8]">None</span><Dn s={16} />
          </div>
        </div>
        <div className="mt-[6px]"><DCheck label="Enable dithering of transparency" /></div>
        <div className="mt-[5px]"><DCheck label="Enable dithering of text layers" /></div>
        <div className="mt-[23px] flex items-center">
          <Btn w={85} label="Help" />
          <div className="flex-1" />
          <Btn w={85} label="Convert" />
          <div className="ml-[8px]"><Btn w={83} label="Cancel" /></div>
        </div>
      </div>
    </div>
  );
}

function Annot() {
  return (
    <>
      <div className="absolute left-[731px] top-[474px] w-[52px] h-[34px] border-[4px] border-[#ed1c24]" />
      <div className="absolute left-[708px] top-[504px] w-[27px] h-[38px] border-[4px] border-[#ed1c24]" />
      <div className="absolute left-[1007px] top-[671px] w-[102px] h-[51px] border-[4px] border-[#ed1c24]" />
      <svg width="62" height="28" viewBox="0 0 62 28" className="absolute left-[982px] top-[479px]"><path d="M0 14L33 0v5h28v17H33v6z" fill="#ed1c24" /></svg>
    </>
  );
}

function WinLogo() {
  return <svg width="21" height="21" viewBox="0 0 21 21" fill="#fff"><path d="M0 3l9-1.200V10H0zM10 1.600L21 0v10H10zM0 11h9v8.200L0 18zM10 11h11v10l-11-1.500z" /></svg>;
}
const tb: { el: React.ReactNode; on?: boolean; active?: boolean }[] = [
  { el: <WinLogo /> },
  { el: <svg width="22" height="22" viewBox="0 0 22 22" fill="none" stroke="#fff" strokeWidth="1.400"><circle cx="13" cy="9" r="7" /><path d="M8 14l-7 7" /></svg> },
  { el: <svg width="22" height="20" viewBox="0 0 22 20" fill="none" stroke="#fff" strokeWidth="1.300" className="mr-[5px]"><rect x="1" y="4" width="13" height="12" /><path d="M1 1h13M1 19h13M20 1v5M20 14v5" /><rect x="19" y="8" width="3" height="3" fill="#fff" stroke="none" /></svg> },
  { el: <svg width="30" height="30" viewBox="0 0 30 30" fill="none" stroke="#fff" strokeWidth="3"><path d="M25 8a13 13 0 1 1-5-5M24 3v6h6" /><circle cx="15" cy="15" r="4" /></svg>, on: true },
  { el: <svg width="30" height="30" viewBox="0 0 30 30"><circle cx="15" cy="15" r="14" fill="#3b9be0" stroke="#d8e8f8" /><path d="M17 5L9 17h5l-2 8 9-12h-5z" fill="#fff" /></svg> },
  { el: <svg width="30" height="32" viewBox="0 0 30 32"><path d="M10 8a5 6 0 0 1 10 0" fill="none" stroke="#ccc" strokeWidth="1.500" /><rect y="7" width="30" height="25" rx="1" fill="#fff" /><rect x="8" y="12" width="6" height="6" fill="#f25022" /><rect x="15" y="12" width="6" height="6" fill="#7fba00" /><rect x="8" y="19" width="6" height="6" fill="#00a4ef" /><rect x="15" y="19" width="6" height="6" fill="#ffb900" /></svg> },
  { el: <svg width="24" height="24" viewBox="0 0 24 24"><rect width="24" height="24" fill="#ffe100" /><path d="M12 24l12-12v12z" fill="#111" /></svg>, on: true },
  { el: <svg width="28" height="30" viewBox="0 0 28 30" fill="none"><path d="M4 17h20C25 7 20 3 14 3 7 3 2 9 2 16c0 8 6 12 13 12 4 0 7-1 9-2v-5c-5 3-13 3-15-4" stroke="#0f78d4" strokeWidth="5" /></svg> },
  { el: <svg width="30" height="30" viewBox="0 0 30 30"><circle cx="15" cy="15" r="14" fill="#db4437" /><path d="M15 15L2.500 22A14 14 0 0 1 6 4l9 11z" fill="#0f9d58" /><path d="M15 15l12-7a14 14 0 0 1-14 21z" fill="#f4b400" /><circle cx="15" cy="15" r="7" fill="#fff" /><circle cx="15" cy="15" r="5.500" fill="#4285f4" /></svg>, on: true },
  { el: <svg width="30" height="28" viewBox="0 0 30 28"><path d="M1 2h11l3 3h14v22H1z" fill="#f3d26b" /><path d="M1 9h28v18H1z" fill="#fae19a" /><path d="M10 18h10v9h-3v-5h-4v5h-3z" fill="#2a8fd4" /></svg>, on: true },
  { el: <svg width="28" height="30" viewBox="0 0 28 30"><rect width="28" height="30" rx="2" fill="#2c3e8e" /><rect x="6" y="0" width="16" height="10" fill="#dfe4f0" /><rect x="15" y="2" width="4" height="6" fill="#2c3e8e" /><rect x="4" y="13" width="20" height="17" fill="#f4c8c8" /><path d="M6 17h16M6 21h16M6 25h10" stroke="#c44" /></svg> },
  { el: <svg width="30" height="32" viewBox="0 0 30 32"><rect x="2" y="0" width="22" height="24" rx="3" fill="#7a8bdc" /><circle cx="9" cy="12" r="2" fill="#fff" /><circle cx="17" cy="12" r="2" fill="#fff" /><circle cx="20" cy="22" r="9" fill="#e8404c" /><circle cx="20" cy="22" r="3.500" fill="#fff" /></svg>, on: true },
  { el: <svg width="28" height="32" viewBox="0 0 28 32"><path d="M0 0h28v14c0 8-8 14-14 18C8 28 0 22 0 14z" fill="#f7b600" /><path d="M20 9h-9c-2 0-3 1-3 4v3c0 3 3 3 5 3h7v-6h-6" fill="none" stroke="#10264f" strokeWidth="3.500" /></svg> },
  { el: <svg width="30" height="34" viewBox="0 0 30 34"><path d="M15 0l15 8-15 9L0 8z" fill="#5f9e3a" /><path d="M0 8l15 9v17L0 26z" fill="#6b4a2e" /><path d="M30 8L15 17v17l15-8z" fill="#8a6238" /></svg> },
  { el: <svg width="30" height="30" viewBox="0 0 30 30"><rect x="8" y="2" width="20" height="26" fill="#e8f2ea" /><path d="M17 6h9M17 11h9M17 16h9M17 21h9M21 3v23" stroke="#1d6f42" /><path d="M0 3l18-3v30L0 27z" fill="#1d6f42" /><text x="4" y="20" fill="#fff" fontSize="13" fontFamily="Noto Sans" fontWeight="700">X</text></svg>, on: true },
  { el: <div className="flex flex-col items-center"><svg width="24" height="12" viewBox="0 0 24 12"><path d="M2 12L3 3l5 3h8l5-6 1 12z" fill="#6c6c6c" /><circle cx="9" cy="9" r="2" fill="#ddd" /><circle cx="16" cy="9" r="2" fill="#ddd" /></svg><Thumb w={30} h={22} cell="" /></div>, on: true, active: true },
  { el: <svg width="30" height="32" viewBox="0 0 30 32"><path d="M3 14C3 7 11 5 17 7c7 2 9 10 5 16-4 6-10 7-14 5-5-2-6-9-5-14z" fill="#dfe8f4" /><circle cx="9" cy="15" r="2.500" fill="#e14" /><circle cx="11" cy="22" r="2.500" fill="#2a6" /><circle cx="17" cy="24" r="2.500" fill="#27c" /><path d="M16 17L27 1" stroke="#b58a4a" strokeWidth="3" /></svg>, on: true },
];

function Taskbar() {
  return (
    <div className="h-[51px] shrink-0 bg-[#0a2351] border-t border-[#6a6a6a] flex text-white text-[13.500px]">
      <div className="flex -ml-[2px]">
        {tb.map((t, i) => (
          <div key={i} className={"w-[61.900px] h-full flex items-center justify-center border-b-[3px] " + (t.active ? "bg-[#1e3f80] " : "") + (t.on ? "border-[#a3c4f0]" : "border-transparent")}>
            {t.el}
          </div>
        ))}
      </div>
      <div className="flex-1" />
      <div className="flex items-center h-full">
        <div className="w-[30px] flex justify-center"><svg width="20" height="20" viewBox="0 0 20 20" fill="none" stroke="#fff" strokeWidth="1.300"><circle cx="6" cy="11" r="3.500" /><path d="M1 20c0-3 2-5 5-5s5 2 5 5" /><circle cx="13" cy="5" r="3.500" /><path d="M12 11c4-1 7 1 7 5" /></svg></div>
        <div className="w-[15px]" />
        <div className="w-[30px] flex justify-center"><svg width="16" height="9" viewBox="0 0 16 9" fill="none" stroke="#fff" strokeWidth="1.200"><path d="M0 8l8-7 8 7" /></svg></div>
        <div className="w-[30px] flex justify-center"><svg width="20" height="13" viewBox="0 0 20 13"><path d="M3 13a3 3 0 0 1 0-6c1-4 8-9 12-2 3 0 5 3 5 5s-1 3-3 3z" fill="#dfe3ea" /><path d="M3 13l7-5 10 3-2 2z" fill="#aab3c4" /></svg></div>
        <div className="w-[30px] flex justify-center"><svg width="20" height="13" viewBox="0 0 20 13"><path d="M3 13a3 3 0 0 1 0-6c1-4 8-9 12-2 3 0 5 3 5 5s-1 3-3 3z" fill="#1a86e0" /></svg></div>
        <div className="w-[29px] flex justify-center"><svg width="20" height="12" viewBox="0 0 20 12" fill="#fff"><path d="M2 0v3M5 0v3M0 3h7v3l-2 2v4H4V8L0 6z" /><rect x="6" y="2.500" width="12" height="8" fill="none" stroke="#fff" /><rect x="7.500" y="4" width="9" height="5" /><rect x="18.500" y="5" width="1.500" height="3" /></svg></div>
        <div className="w-[33px] flex justify-center"><svg width="18" height="16" viewBox="0 0 18 16" fill="none" stroke="#cfd6e4" strokeWidth="1"><path d="M1 15C1 8 8 1 17 1M5 15c0-5 5-10 12-10M9 15c0-3 3-6 7-6" /><circle cx="14" cy="14" r="1.500" fill="#fff" stroke="none" /></svg></div>
        <div className="w-[27px] flex justify-center"><svg width="20" height="16" viewBox="0 0 20 16" fill="none" stroke="#fff" strokeWidth="1"><path d="M1 5h3l5-4v14l-5-4H1zM12 5c1 2 1 4 0 6M15 3c2 3 2 7 0 10M18 1c2 4 2 10 0 14" /></svg></div>
        <div className="w-[42px] flex justify-center"><svg width="30" height="17" viewBox="0 0 30 17" fill="none" stroke="#fff"><rect x=".5" y=".5" width="29" height="16" /><path d="M3 4h24M3 8h24" strokeDasharray="1.500 1.500" /><path d="M3 12h5M10 12h10M22 12h5" /></svg></div>
        <div className="w-[42px] flex flex-col items-center leading-[22px]"><span>CES</span><span>CSP</span></div>
        <div className="w-[90px] flex flex-col items-center leading-[22px]"><span>8:38</span><span>26.07.2019</span></div>
        <div className="w-[46px] h-full relative">
          <div className="absolute left-[13px] top-[14px] w-[19px] h-[16px] bg-white flex flex-col gap-[2px] pt-[3px] px-[3px]"><span className="h-[1px] bg-[#555]" /><span className="h-[1px] bg-[#555]" /><span className="h-[1px] bg-[#555]" /></div>
          <div className="absolute left-[22px] top-[23px] w-[21px] h-[21px] rounded-full bg-[#0e2f6b] border border-[#1d5aa8] text-center leading-[19px] font-bold text-[13px]">9</div>
        </div>
        <div className="w-[5px]" />
        <div className="w-[1px] h-full bg-[#2a4575]" />
        <div className="w-[12px]" />
      </div>
    </div>
  );
}

export default function App() {
  return (
    <div className="relative w-[1920px] h-[1080px] overflow-hidden bg-[#474747] flex flex-col font-['Noto_Sans',sans-serif]">
      <div className="h-[29px] shrink-0 bg-white flex items-center pl-[2px] pr-[6px] text-[14.200px] text-[#8a8a8a]">
        <AppIcon />
        <span className="flex-1">*[Untitled]-2.0 (RGB colour 8-bit gamma integer, GIMP built-in sRGB, 1 layer) 12x7 – GIMP</span>
        <div className="flex items-center text-[#9a9a9a]">
          <div className="w-[58px] flex justify-center"><div className="w-[10px] h-[1px] bg-[#a8a8a8]" /></div>
          <div className="w-[58px] flex justify-center"><div className="w-[11px] h-[11px] border border-[#a8a8a8] shadow-[2px_-2px_0_-1px_#ffffff,2px_-2px_0_0_#a8a8a8]" /></div>
          <div className="w-[58px] flex justify-center"><X size={15} color="#444" strokeWidth={1} /></div>
        </div>
      </div>
      <div className="h-[31px] shrink-0 flex items-center text-[14px] text-[#dcdcdc] pb-[1px]">
        {[["File", 35], ["Edit", 38], ["Select", 51], ["View", 44], ["Image", 54], ["Layer", 47], ["Colours", 62], ["Tools", 48], ["Filters", 51], ["Windows", 73], ["Help", 40]].map(([m, w], i) => (
          <span key={i} className={i === 0 ? "ml-[8px]" : ""} style={{ width: w as number }}>{m}</span>
        ))}
      </div>
      <div className="flex-1 min-h-0 flex">
        <LeftDock />
        <Center />
        <RightDock />
      </div>
      <Taskbar />
      <Dialog />
      <Annot />
    </div>
  );
}
